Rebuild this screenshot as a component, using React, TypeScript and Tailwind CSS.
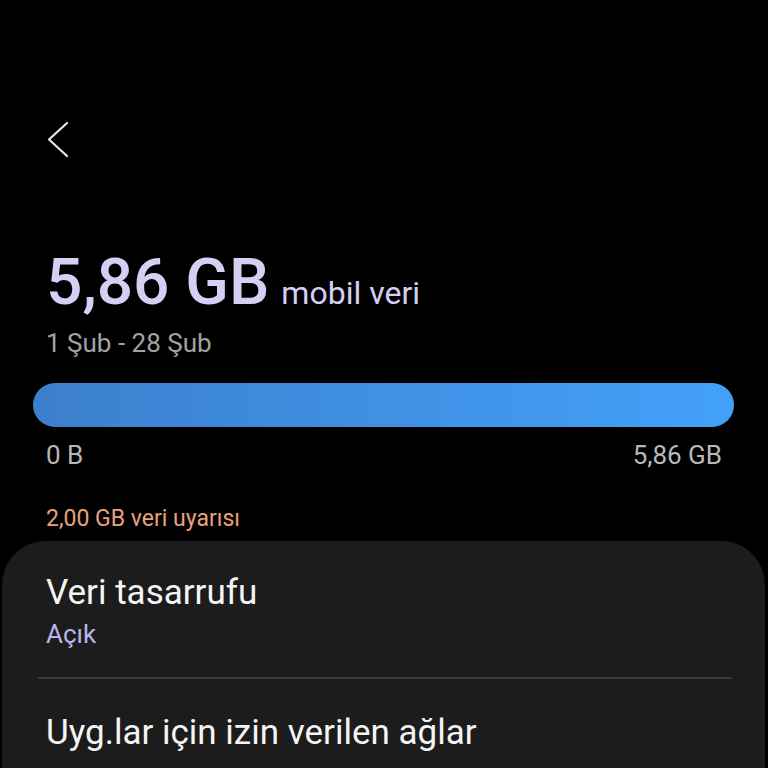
import React from "react";

export default function App() {
  return (
    <div
      className="w-[768px] h-[768px] overflow-hidden bg-black flex flex-col"
      style={{ fontFamily: "Roboto, 'Noto Sans', sans-serif" }}
    >
      <div className="pt-[121px] pl-[45px] h-[251px]">
        <svg width="26" height="38" viewBox="0 0 26 38" fill="none">
          <path
            d="M22 2 L4 18.5 L22 35"
            stroke="#e6e6e6"
            strokeWidth="2.2"
            strokeLinecap="round"
            strokeLinejoin="round"
          />
        </svg>
      </div>
      <div className="px-[46px] flex items-baseline gap-[12px] text-[#d4d0f4]">
        <span className="text-[64px] leading-none font-medium">5,86 GB</span>
        <span className="text-[32px] leading-none">mobil veri</span>
      </div>
      <div className="px-[46px] mt-[15px] text-[26px] leading-none text-[#a3a3a3]">
        1 Şub - 28 Şub
      </div>
      <div className="mt-[27px] ml-[33px] mr-[34px] h-[44px] rounded-full bg-gradient-to-r from-[#3c7fcc] to-[#43a1fb]" />
      <div className="px-[46px] mt-[15px] flex justify-between text-[26px] leading-none text-[#b8b8b8]">
        <span>0 B</span>
        <span>5,86 GB</span>
      </div>
      <div className="px-[46px] mt-[39px] text-[23px] leading-none text-[#e9a17c]">
        2,00 GB veri uyarısı
      </div>
      <div className="mt-[11px] ml-[2px] mr-[3px] flex-1 bg-[#1c1c1c] rounded-t-[44px] pt-[34px]">
        <div className="px-[44px] text-[35px] leading-none text-[#f4f4f4]">
          Veri tasarrufu
        </div>
        <div className="px-[44px] mt-[11px] text-[26px] leading-none text-[#bab5e8]">
          Açık
        </div>
        <div className="mt-[30px] ml-[36px] mr-[33px] h-[2px] bg-[#393939]" />
        <div className="px-[44px] mt-[36px] text-[35px] leading-none text-[#f4f4f4]">
          Uyg.lar için izin verilen ağlar
        </div>
      </div>
    </div>
  );
}
